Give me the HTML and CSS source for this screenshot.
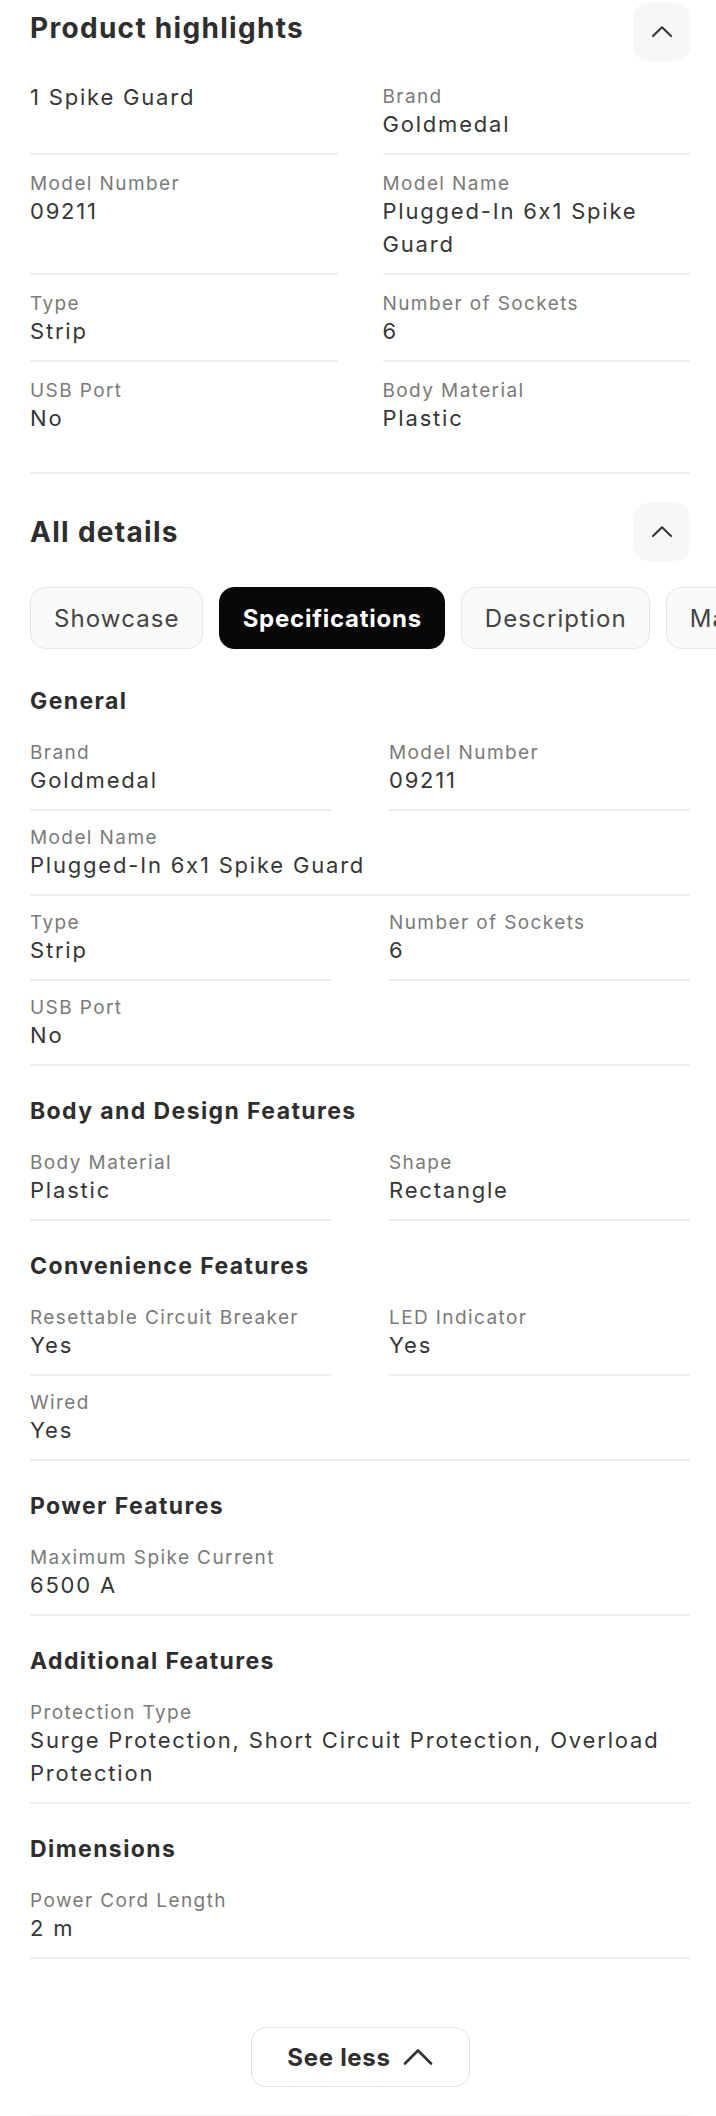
FILE: index.html
```html
<!DOCTYPE html>
<html lang="en">
<head>
<meta charset="utf-8">
<title>Product details</title>
<link rel="stylesheet" href="styles.css">
</head>
<body>
<div class="page">
  <section class="highlights">
    <div class="sec-head first">
      <h2 class="sec-title">Product highlights</h2>
      <button class="toggle" aria-label="Collapse">
        <svg width="20" height="11" viewBox="0 0 20 11"><path d="M1 10 L10 1.2 L19 10" fill="none" stroke="#333" stroke-width="2" stroke-linecap="round" stroke-linejoin="round"/></svg>
      </button>
    </div>
    <div class="hl-grid">
      <div class="item"><div class="value lead">1 Spike Guard</div></div>
      <div class="item"><div class="label">Brand</div><div class="value">Goldmedal</div></div>
      <div class="item"><div class="label">Model Number</div><div class="value">09211</div></div>
      <div class="item"><div class="label">Model Name</div><div class="value">Plugged-In 6x1 Spike Guard</div></div>
      <div class="item"><div class="label">Type</div><div class="value">Strip</div></div>
      <div class="item"><div class="label">Number of Sockets</div><div class="value">6</div></div>
      <div class="item last"><div class="label">USB Port</div><div class="value">No</div></div>
      <div class="item last"><div class="label">Body Material</div><div class="value">Plastic</div></div>
    </div>
  </section>

  <section class="details">
    <div class="sec-head">
      <h2 class="sec-title">All details</h2>
      <button class="toggle" aria-label="Collapse">
        <svg width="20" height="11" viewBox="0 0 20 11"><path d="M1 10 L10 1.2 L19 10" fill="none" stroke="#333" stroke-width="2" stroke-linecap="round" stroke-linejoin="round"/></svg>
      </button>
    </div>
    <div class="tabs">
      <span class="tab">Showcase</span>
      <span class="tab active">Specifications</span>
      <span class="tab">Description</span>
      <span class="tab">Manufacturer info</span>
    </div>

    <div class="group">
      <h3 class="group-title">General</h3>
      <div class="spec-grid">
        <div class="item"><div class="label">Brand</div><div class="value">Goldmedal</div></div>
        <div class="item"><div class="label">Model Number</div><div class="value">09211</div></div>
        <div class="item full"><div class="label">Model Name</div><div class="value">Plugged-In 6x1 Spike Guard</div></div>
        <div class="item"><div class="label">Type</div><div class="value">Strip</div></div>
        <div class="item"><div class="label">Number of Sockets</div><div class="value">6</div></div>
        <div class="item full"><div class="label">USB Port</div><div class="value">No</div></div>
      </div>
    </div>

    <div class="group">
      <h3 class="group-title">Body and Design Features</h3>
      <div class="spec-grid">
        <div class="item"><div class="label">Body Material</div><div class="value">Plastic</div></div>
        <div class="item"><div class="label">Shape</div><div class="value">Rectangle</div></div>
      </div>
    </div>

    <div class="group">
      <h3 class="group-title">Convenience Features</h3>
      <div class="spec-grid">
        <div class="item"><div class="label">Resettable Circuit Breaker</div><div class="value">Yes</div></div>
        <div class="item"><div class="label">LED Indicator</div><div class="value">Yes</div></div>
        <div class="item full"><div class="label">Wired</div><div class="value">Yes</div></div>
      </div>
    </div>

    <div class="group">
      <h3 class="group-title">Power Features</h3>
      <div class="spec-grid">
        <div class="item full"><div class="label">Maximum Spike Current</div><div class="value">6500 A</div></div>
      </div>
    </div>

    <div class="group">
      <h3 class="group-title">Additional Features</h3>
      <div class="spec-grid">
        <div class="item full"><div class="label">Protection Type</div><div class="value">Surge Protection, Short Circuit Protection, Overload Protection</div></div>
      </div>
    </div>

    <div class="group">
      <h3 class="group-title">Dimensions</h3>
      <div class="spec-grid">
        <div class="item full"><div class="label">Power Cord Length</div><div class="value">2 m</div></div>
      </div>
    </div>

    <div class="more">
      <button class="see-less">See less
        <svg width="30" height="17" viewBox="0 0 30 17"><path d="M2 15.5 L15 2.5 L28 15.5" fill="none" stroke="#333" stroke-width="2.6" stroke-linecap="round" stroke-linejoin="round"/></svg>
      </button>
    </div>
  </section>
</div>
</body>
</html>
```

FILE: styles.css
```css
* { box-sizing: border-box; }

html, body {
  margin: 0;
  padding: 0;
  background: #ffffff;
}

body {
  font-family: Inter, "Noto Sans", "Liberation Sans", sans-serif;
  font-feature-settings: "calt" 0;
  color: #333333;
  overflow-x: hidden;
}

.page {
  padding: 0 26px 0 30px;
}

h2, h3 { margin: 0; }

.sec-head {
  display: flex;
  justify-content: space-between;
  align-items: center;
}

.sec-head.first {
  align-items: flex-start;
  padding-top: 3px;
}

.sec-head.first .sec-title {
  margin-top: 7px;
}

.sec-title {
  font-size: 28px;
  line-height: 36px;
  font-weight: 700;
  color: #2e2e2e;
  letter-spacing: 1.3px;
}

.toggle {
  width: 57px;
  height: 58px;
  border: none;
  border-radius: 15px;
  background: #f7f7f7;
  display: flex;
  align-items: center;
  justify-content: center;
  padding: 0;
}

.toggle svg { display: block; margin-top: -2px; }

.highlights {
  padding-bottom: 25px;
  border-bottom: 2px solid #efefef;
}

.hl-grid {
  margin-top: 7px;
  display: grid;
  grid-template-columns: 1fr 1fr;
  column-gap: 45px;
}

.item {
  padding: 17px 0 12px;
  border-bottom: 2px solid #efefef;
}

.item.last { border-bottom: none; }

.label {
  font-size: 19px;
  line-height: 23px;
  color: #7a7a7a;
  letter-spacing: 1.4px;
}

.value {
  font-size: 22px;
  line-height: 33px;
  color: #363636;
  letter-spacing: 1.8px;
}

.value.lead { line-height: 24px; }

.details .sec-head {
  margin-top: 29px;
}

.tabs {
  margin-top: 26px;
  margin-right: -26px;
  display: flex;
  gap: 16px;
  overflow: hidden;
  white-space: nowrap;
}

.tab {
  flex: none;
  height: 62px;
  padding: 0 22px 0 23px;
  display: flex;
  align-items: center;
  font-size: 24px;
  color: #444444;
  letter-spacing: 1.1px;
  background: #fafafa;
  border: 1.5px solid #e6e6e6;
  border-radius: 15px;
}

.tab.active {
  background: #080808;
  border-color: #080808;
  color: #ffffff;
  font-weight: 700;
  letter-spacing: 0.75px;
}

.group { margin-top: 30px; }
.tabs + .group { margin-top: 37px; }

.group-title {
  font-size: 23px;
  line-height: 30px;
  font-weight: 700;
  color: #2e2e2e;
  letter-spacing: 1.4px;
  margin-bottom: 10px;
}

.spec-grid {
  display: grid;
  grid-template-columns: 1fr 1fr;
  column-gap: 58px;
}

.spec-grid .item {
  padding: 15px 0 12px;
}

.item.full { grid-column: 1 / -1; }

.more {
  margin-top: 68px;
  padding-bottom: 28px;
  border-bottom: 2px solid #f0f0f0;
  display: flex;
  justify-content: center;
}

.see-less {
  width: 219px;
  height: 60px;
  display: flex;
  align-items: center;
  justify-content: center;
  gap: 12px;
  font-family: inherit;
  font-size: 24px;
  font-weight: 700;
  color: #2e2e2e;
  letter-spacing: 0.7px;
  background: #ffffff;
  border: 1.5px solid #e3e3e3;
  border-radius: 15px;
  padding: 0;
}

.see-less svg { display: block; margin-top: -2px; }
```
